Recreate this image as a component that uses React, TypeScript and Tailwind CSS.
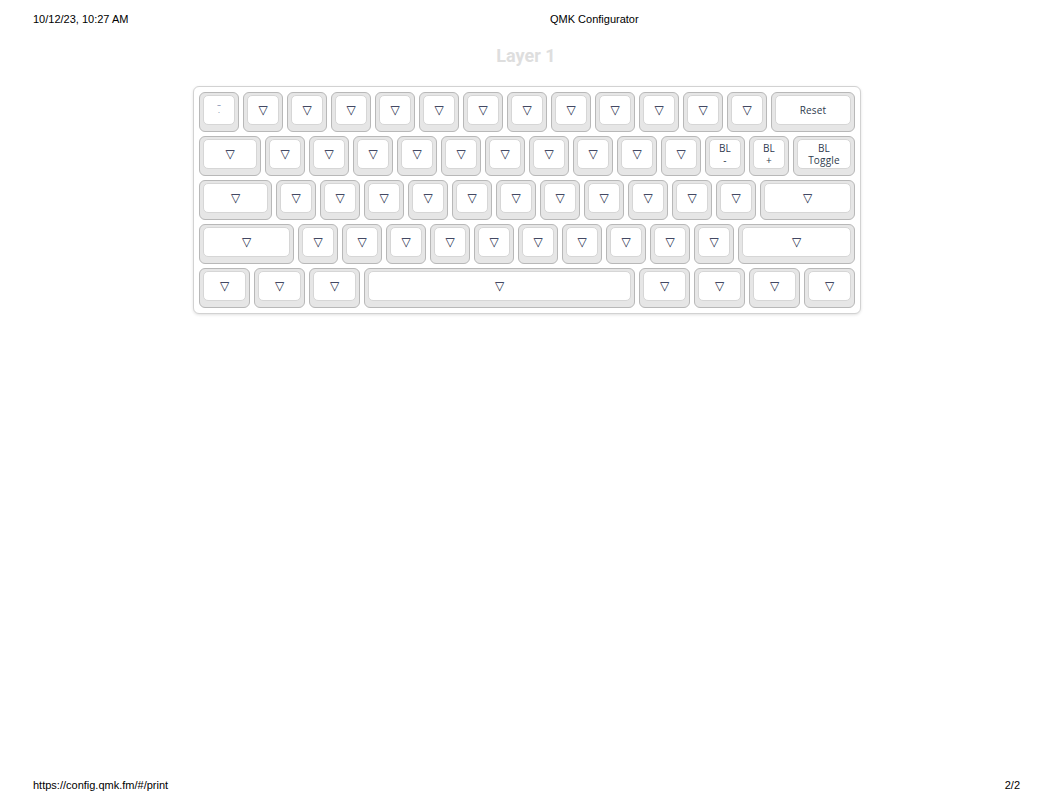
import React from "react";

type KeyDef = {
  w: number;
  label?: string[];
  small?: boolean;
};

const widthClass: Record<number, string> = {
  1: "w-[40px]",
  1.25: "w-[51px]",
  1.5: "w-[62px]",
  1.75: "w-[73px]",
  2: "w-[84px]",
  2.25: "w-[95px]",
  2.75: "w-[117px]",
  6.25: "w-[271px]",
};

const t = (w: number): KeyDef => ({ w });
const ones = (n: number) => Array.from({ length: n }, () => t(1));

const rows: KeyDef[][] = [
  [{ w: 1, label: ["~", "`"], small: true }, ...ones(12), { w: 2, label: ["Reset"] }],
  [t(1.5), ...ones(10), { w: 1, label: ["BL", "-"] }, { w: 1, label: ["BL", "+"] }, { w: 1.5, label: ["BL", "Toggle"] }],
  [t(1.75), ...ones(11), t(2.25)],
  [t(2.25), ...ones(10), t(2.75)],
  [t(1.25), t(1.25), t(1.25), t(6.25), t(1.25), t(1.25), t(1.25), t(1.25)],
];

function Key({ def }: { def: KeyDef }) {
  return (
    <div
      className={`${widthClass[def.w]} m-[2px] h-[40px] shrink-0 rounded-[6px] border border-[#b8b8b8] bg-[#e6e6e6] px-[3px] pt-[2px] pb-[6px]`}
    >
      <div className="flex h-full flex-col items-center justify-center rounded-[5px] border border-[#d6d6d6] bg-white">
        {def.label ? (
          def.small ? (
            <div className="flex flex-col items-center text-[7px] leading-[9px] text-[#4a6394] font-['Open_Sans',sans-serif]">
              {def.label.map((l) => (
                <span key={l}>{l}</span>
              ))}
            </div>
          ) : (
            <div className="flex flex-col items-center text-[10px] leading-[12px] tracking-[0.2px] text-[#2e3b4e] font-['Open_Sans',sans-serif]">
              {def.label.map((l) => (
                <span key={l}>{l}</span>
              ))}
            </div>
          )
        ) : (
          <span className="text-[12px] leading-none text-[#0f1640] font-['DejaVu_Sans',sans-serif]">
            ▽
          </span>
        )}
      </div>
    </div>
  );
}

export default function App() {
  return (
    <div className="flex h-[803px] w-[1048px] flex-col bg-white font-['Liberation_Sans',Arial,sans-serif] text-black">
      <div className="flex pl-[33px] pt-[12px] text-[11px] leading-[14px]">
        <span className="w-[517px]">10/12/23, 10:27 AM</span>
        <span>QMK Configurator</span>
      </div>

      <div className="mt-[19px] pl-[4px] text-center text-[18px] font-bold leading-[22px] text-[#dedede] font-['Roboto',sans-serif]">
        Layer 1
      </div>

      <div className="mt-[19px] flex justify-center pl-[6px]">
        <div className="rounded-[6px] border border-[#d2d2d2] bg-white p-[3px] shadow-[0_1px_3px_rgba(0,0,0,0.12)]">
          {rows.map((row, i) => (
            <div key={i} className="flex">
              {row.map((k, j) => (
                <Key key={j} def={k} />
              ))}
            </div>
          ))}
        </div>
      </div>

      <div className="mt-auto flex justify-between pb-[11px] pl-[33px] pr-[28px] text-[11px] leading-[14px]">
        <span>https://config.qmk.fm/#/print</span>
        <span>2/2</span>
      </div>
    </div>
  );
}
